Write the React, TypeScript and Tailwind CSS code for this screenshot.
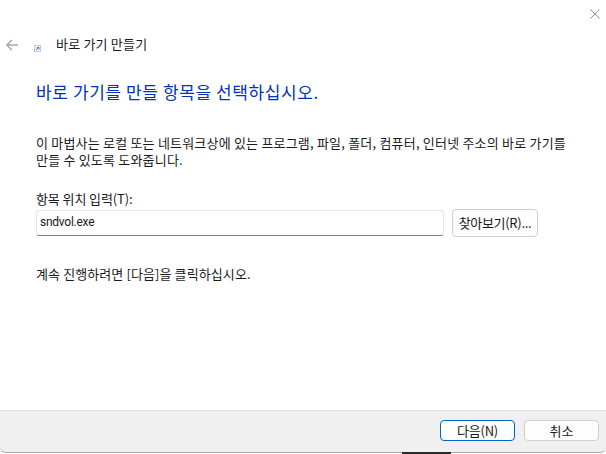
const font = "font-['Noto_Sans_CJK_KR','Liberation_Sans',sans-serif]";

export default function App() {
  return (
    <div className={`relative flex h-[454px] w-[606px] flex-col overflow-hidden bg-white text-[#1a1a1a] ${font}`}>
      {/* Title bar */}
      <div className="flex h-[31px] justify-end pt-[9px] pr-[6px]">
        <svg width="10" height="10" viewBox="0 0 10 10" className="text-[#8f8f8f]" fill="none" stroke="currentColor" strokeWidth="1">
          <path d="M0.5 0.5l9 9M9.5 0.5l-9 9" />
        </svg>
      </div>

      {/* Header */}
      <div className="flex h-[27px] items-center pl-[6px]">
        <svg width="14" height="12" viewBox="0 0 14 12" className="text-[#a8a8a8]" fill="none" stroke="currentColor" strokeWidth="1.6">
          <path d="M12 6H0.8M5.8 1 0.8 6l5 5" />
        </svg>
        <svg width="7" height="7" viewBox="0 0 7 7" className="mt-[8px] ml-[14px]">
          <rect x="0.5" y="0.5" width="6" height="6" fill="#f4f6fa" stroke="#c5c9d0" />
          <path d="M2 5 4.5 2.5M3 2.5h2v2" stroke="#3b78c8" fill="none" />
        </svg>
        <span className="mb-[2px] ml-[15px] text-[13px] leading-none tracking-[0.2px]">바로 가기 만들기</span>
      </div>

      {/* Content */}
      <div className="flex flex-1 flex-col pl-[36px]">
        <h1 className="mt-[24px] text-[17px] leading-[20px] font-normal tracking-[0.6px] text-[#0033bc]">바로 가기를 만들 항목을 선택하십시오.</h1>
        <p className="mt-[32px] w-[536px] text-[13px] leading-[17px] tracking-[0.2px]">
          이 마법사는 로컬 또는 네트워크상에 있는 프로그램, 파일, 폴더, 컴퓨터, 인터넷 주소의 바로 가기를 만들 수 있도록 도와줍니다.
        </p>
        <label className="mt-[22px] text-[13px] leading-[17px] tracking-[-0.1px]">항목 위치 입력(T):</label>
        <div className="mt-[2px] flex items-center">
          <div className="flex h-[26px] w-[408px] items-center rounded-[3px] border border-[#e5e5e5] border-b-[#808080] pb-[2px] pl-[3px] font-['Roboto',sans-serif] text-[12px] tracking-[-0.25px]">sndvol.exe</div>
          <button className="ml-[8px] h-[28px] w-[86px] rounded-[4px] border border-[#cfcfcf] bg-[#fdfdfd] text-[13px] tracking-[-0.3px]">찾아보기(R)...</button>
        </div>
        <p className="mt-[28px] text-[13px] leading-[17px] tracking-[0.1px]">계속 진행하려면 [다음]을 클릭하십시오.</p>
      </div>

      {/* Footer */}
      <div className="flex h-[43px] items-start justify-end gap-[9px] rounded-b-[6px] border-t border-b border-t-[#dfdfdf] border-b-[#a9a9a9] bg-[#f0f0f0] pt-[9px] pr-[7px]">
        <button className="h-[21px] w-[75px] rounded-[4px] border border-[#0067c0] bg-[#fdfdfd] text-[13px] leading-none tracking-[-0.2px]">다음(N)</button>
        <button className="h-[21px] w-[75px] rounded-[4px] border border-[#cfcfcf] bg-[#fdfdfd] text-[13px] leading-none">취소</button>
      </div>
      <div className="h-[1px] bg-white" />
      <div className="absolute bottom-0 left-[402px] h-[2px] w-[49px] bg-[#2b2b2b]" />
    </div>
  );
}
